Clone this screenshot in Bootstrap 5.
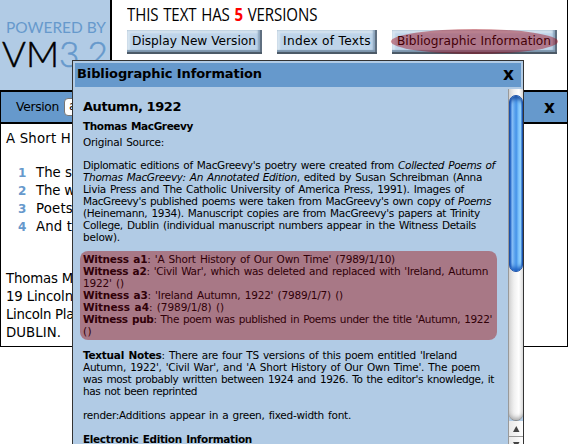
<!DOCTYPE html>
<html lang="en">
<head>
<meta charset="utf-8">
<title>Versioning Machine 3.2</title>
<link rel="stylesheet" href="https://cdn.jsdelivr.net/npm/bootstrap@5.3.0/dist/css/bootstrap.min.css">
<style>
body{width:568px;height:444px;overflow:hidden;background:#fff;color:#000;font-family:"DejaVu Sans",Verdana,sans-serif;font-size:13.3px}
.app{width:568px;height:347px;border-right:1px solid #000}
.brand{width:112px;height:90px;background:#b1cbe5;border-right:2px solid #000}
.brand svg{display:block}
.top-area{padding:6px 0 0 15px}
.headline{height:24px;font:17.3px/17px "Open Sans",sans-serif;word-spacing:1px}
.headline span{transform:scaleX(.87);transform-origin:0 0}
.headline b{color:#f00}
.bevel{position:relative;height:24px;padding:0 0 1px 5px;border:0;border-radius:0;background:#bed4e9;color:#000;font-size:12.2px;line-height:23px;text-align:left;box-shadow:inset 0 -2px 0 #4c5a67,inset -2px 0 0 #5f6f80,inset 0 -4px 1px #7c95ac,inset -4px 0 2px #89a2ba,inset 3px 3px 2px #d7e5f1}
.b1{width:135px}.b2{width:100px;padding-left:6px}.b3{width:165px}
.oval{position:absolute;left:-1px;top:-1px;width:167px;height:25px;border-radius:50%;background:rgba(153,0,17,.43)}
.panel{height:257px;border:1px solid #000;border-top-width:2px;border-right:0}
.bar{height:32px;background:#69c;border-bottom:2px solid #000;padding:0 12px 0 15px;font-size:12.3px}
.pick{width:80px;height:18px;margin-left:5px;border:1px solid #777;border-radius:4px;background:#fff;padding-left:4px;line-height:15px}
.poem{padding:6px 0 0 5px;line-height:18px}
.stanza{padding:16px 0 34px}
.num{width:30px;padding-left:12px;color:#69c;font-weight:700;font-size:12px}
.popup{position:absolute;left:72px;top:60px;width:452px;height:400px;background:#b1cbe5;border:1px solid #333}
.pop-head{height:24px;margin:2px 2px 0;background:#69c;padding:0 7px 3px 2px;font-size:13px}
.ex{font:bold 17px/20px "DejaVu Sans",sans-serif}
.notes{width:435px;padding:12px 0 0 10px;font-size:10.5px;line-height:12px;word-spacing:.1em}
.notes h2{font-size:13px;font-weight:700;line-height:16px;margin:0 0 5px;word-spacing:0}
.source{padding-top:11px}
.marked{width:417px;height:89px;margin:8px 0 9px -3px;padding:2px 0 0 3px;border-radius:8px;background:#a87886;color:#300008}
[data-w]{display:inline-block;white-space:nowrap}
.ln{height:12px;white-space:nowrap}
.scroller{width:15px;height:356px;margin-top:2px;border-left:1px solid #999}
.track{height:332px;padding-top:6px;border-radius:0 0 7px 7px;border-bottom:1px solid #888;background:linear-gradient(90deg,#d2d2d2,#f0f0f0 35%,#fff 70%,#ddd);box-shadow:inset 0 -5px 4px -3px #aaa}
.thumb{height:177px;border-radius:7px;border:1px solid #1b50a8;background:linear-gradient(90deg,#1b5cc5 0,#8fc4f8 18%,#65aaf0 34%,#4693e8 52%,#7cc2fb 72%,#9ddcff 88%,#3d84dc 100%);box-shadow:inset 0 5px 4px -2px #1e50a0,inset 0 -5px 4px -2px #1e5fc0}
.arrows{height:24px;background:linear-gradient(90deg,#e8e8e8,#fff)}
</style>
<script src="https://cdn.jsdelivr.net/npm/bootstrap@5.3.0/dist/js/bootstrap.bundle.min.js"></script>
</head>
<body>
<div class="app">
  <div class="d-flex">
    <div class="brand flex-shrink-0">
      <svg width="110" height="90" font-family="Lato">
        <text x="6" y="33" font-size="16" fill="#69c" textLength="100" lengthAdjust="spacingAndGlyphs">POWERED BY</text>
        <text x="2" y="67" font-size="35" font-weight="300" fill="#000" stroke="#000" stroke-width=".5" textLength="57" lengthAdjust="spacingAndGlyphs">VM</text>
        <text x="59" y="67" font-size="35" font-weight="300" fill="#69c" stroke="#69c" stroke-width=".5" textLength="49" lengthAdjust="spacingAndGlyphs">3.2</text>
      </svg>
    </div>
    <div class="top-area">
      <div class="headline"><span data-w="190">THIS TEXT HAS <b>5</b> VERSIONS</span></div>
      <div class="d-flex" style="gap:15px">
        <button class="btn bevel b1"><span data-w="124">Display New Version</span></button>
        <button class="btn bevel b2"><span data-w="88">Index of Texts</span></button>
        <button class="btn bevel b3"><span data-w="154">Bibliographic Information</span><span class="oval"></span></button>
      </div>
    </div>
  </div>
  <div class="panel">
    <div class="bar d-flex align-items-center">
      <span data-w="43">Version</span><span class="pick">a</span><span class="ex ms-auto">x</span>
    </div>
    <div class="poem">
      <div><span data-w="65">A Short H</span></div>
      <div class="stanza">
        <div class="d-flex"><span class="num">1</span><span data-w="36">The s</span></div>
        <div class="d-flex"><span class="num">2</span><span data-w="39">The w</span></div>
        <div class="d-flex"><span class="num">3</span><span data-w="37">Poets</span></div>
        <div class="d-flex"><span class="num">4</span><span data-w="36">And t</span></div>
      </div>
      <div><span data-w="67">Thomas M</span></div>
      <div><span data-w="67">19 Lincoln</span></div>
      <div><span data-w="68">Lincoln Pla</span></div>
      <div><span data-w="55">DUBLIN.</span></div>
    </div>
  </div>
</div>

<div class="popup">
  <div class="pop-head d-flex align-items-center justify-content-between"><b data-w="185">Bibliographic Information</b><span class="ex">x</span></div>
  <div class="d-flex">
    <div class="notes">
      <h2><span data-w="98">Autumn, 1922</span></h2>
      <div class="ln"><b data-w="110">Thomas MacGreevy</b></div>
      <div class="ln mt-1"><span data-w="81">Original Source:</span></div>
      <div class="source">
        <div class="ln"><span data-w="412">Diplomatic editions of MacGreevy's poetry were created from <i>Collected Poems of</i></span></div>
        <div class="ln"><span data-w="399"><i>Thomas MacGreevy: An Annotated Edition</i>, edited by Susan Schreibman (Anna</span></div>
        <div class="ln"><span data-w="381">Livia Press and The Catholic University of America Press, 1991). Images of</span></div>
        <div class="ln"><span data-w="408">MacGreevy's published poems were taken from MacGreevy's own copy of <i>Poems</i></span></div>
        <div class="ln"><span data-w="397">(Heinemann, 1934). Manuscript copies are from MacGreevy's papers at Trinity</span></div>
        <div class="ln"><span data-w="393">College, Dublin (individual manuscript numbers appear in the Witness Details</span></div>
        <div class="ln"><span data-w="37">below).</span></div>
      </div>
      <div class="marked">
        <div class="ln"><span data-w="312"><b>Witness a1</b>: 'A Short History of Our Own Time' (7989/1/10)</span></div>
        <div class="ln"><span data-w="405"><b>Witness a2</b>: 'Civil War', which was deleted and replaced with 'Ireland, Autumn</span></div>
        <div class="ln"><span data-w="41">1922' ()</span></div>
        <div class="ln"><span data-w="260"><b>Witness a3</b>: 'Ireland Autumn, 1922' (7989/1/7) ()</span></div>
        <div class="ln"><span data-w="141"><b>Witness a4</b>: (7989/1/8) ()</span></div>
        <div class="ln"><span data-w="409"><b>Witness pub</b>: The poem was published in Poems under the title 'Autumn, 1922'</span></div>
        <div class="ln"><span data-w="9">()</span></div>
      </div>
      <div class="ln"><span data-w="374"><b>Textual Notes</b>: There are four TS versions of this poem entitled 'Ireland</span></div>
      <div class="ln"><span data-w="397">Autumn, 1922', 'Civil War', and 'A Short History of Our Own Time'. The poem</span></div>
      <div class="ln"><span data-w="411">was most probably written between 1924 and 1926. To the editor's knowledge, it</span></div>
      <div class="ln"><span data-w="114">has not been reprinted</span></div>
      <div class="ln"></div>
      <div class="ln"><span data-w="268">render:Additions appear in a green, fixed-width font.</span></div>
      <div class="ln"></div>
      <div class="ln"><b data-w="169">Electronic Edition Information</b></div>
    </div>
    <div class="scroller">
      <div class="track"><div class="thumb"></div></div>
      <div class="arrows"><svg class="d-block" width="14" height="24"><path d="M4 11L7.300 5L10.500 11Z" fill="#444"/><path d="M0 15.500H14" stroke="#999"/><path d="M4 21H10.500L7.300 27Z" fill="#444"/></svg></div>
    </div>
  </div>
</div>
<script>
// Even out the tracking so that each line fills its measure.
document.querySelectorAll('[data-w]').forEach(function (el) {
  var n = el.textContent.length;
  el.style.letterSpacing = (el.dataset.w - el.getBoundingClientRect().width) / n + 'px';
});
</script>
</body>
</html>
